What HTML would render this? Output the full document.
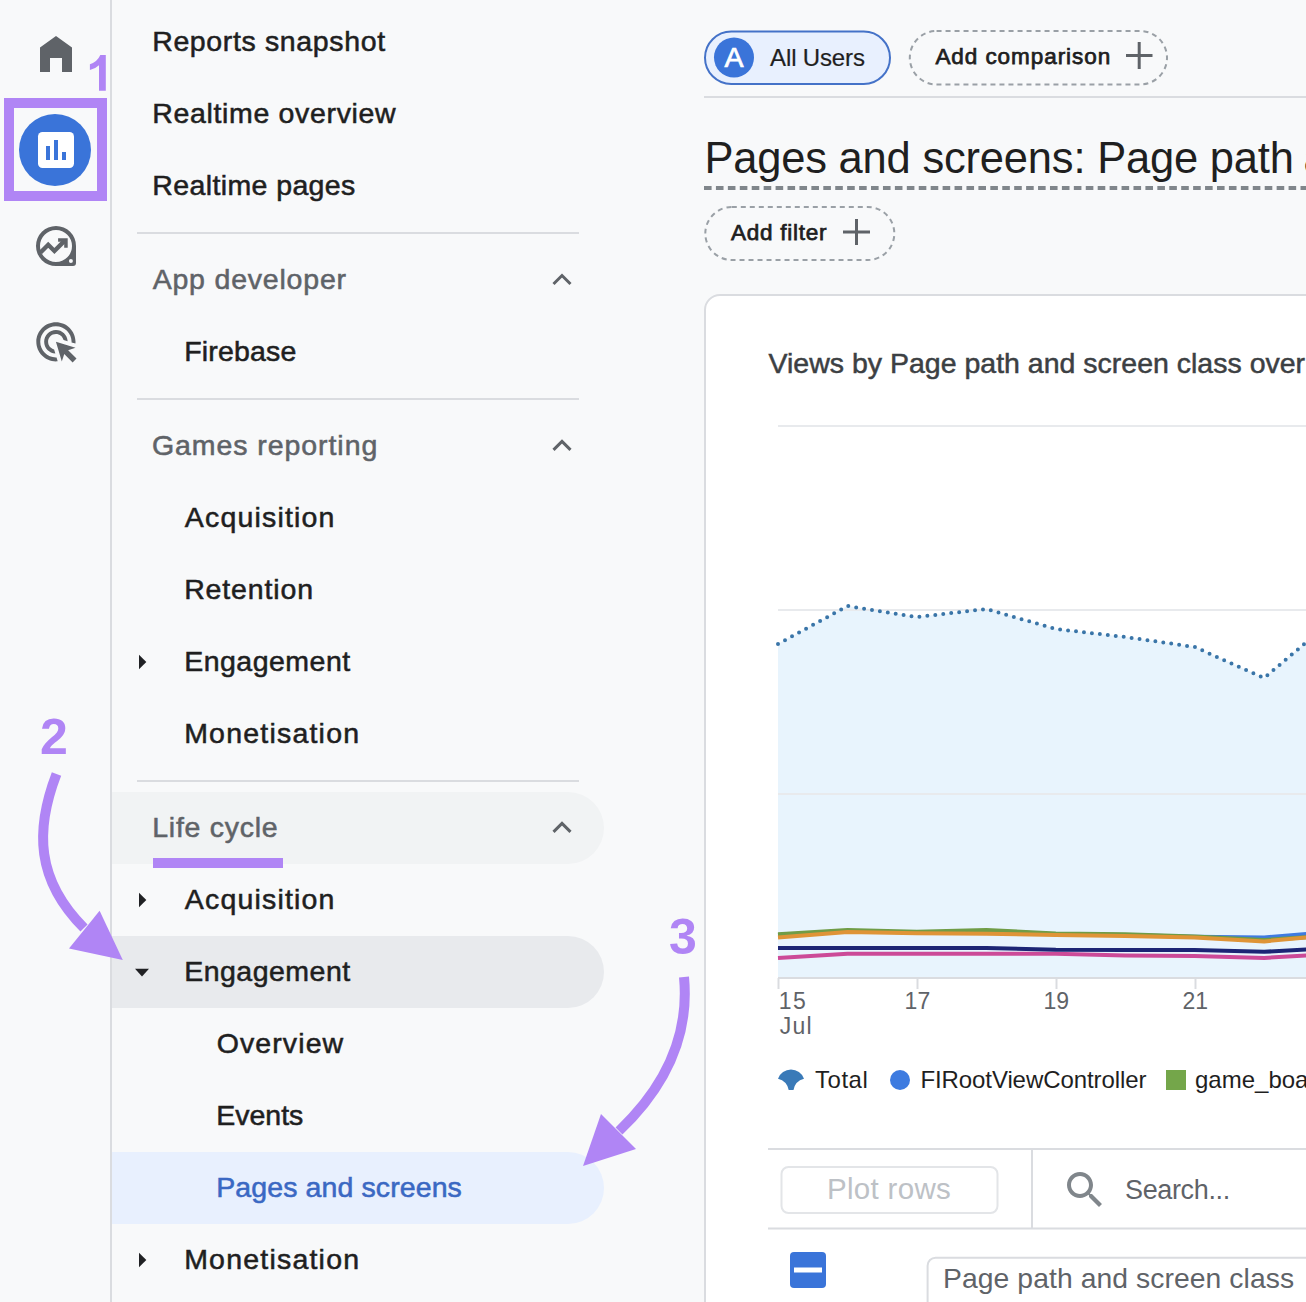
<!DOCTYPE html>
<html>
<head>
<meta charset="utf-8">
<style>
html,body{margin:0;padding:0;width:1306px;height:1302px;overflow:hidden;background:#f8f9fa;}
svg{display:block;font-family:"Liberation Sans", sans-serif;}
</style>
</head>
<body>
<svg width="1306" height="1302" viewBox="0 0 1306 1302">
<rect x="0" y="0" width="1306" height="1302" fill="#f8f9fa"/>
<!-- rail divider -->
<rect x="110" y="0" width="2" height="1302" fill="#dadce0"/>
<!-- sidebar highlights -->
<path d="M112,792 H568 A36,36 0 0 1 568,864 H112 Z" fill="#f1f3f4"/>
<path d="M112,936 H568 A36,36 0 0 1 568,1008 H112 Z" fill="#e8eaed"/>
<path d="M112,1152 H568 A36,36 0 0 1 568,1224 H112 Z" fill="#e8f0fe"/>
<!-- sidebar dividers -->
<rect x="137" y="232" width="442" height="2" fill="#dadce0"/>
<rect x="137" y="398" width="442" height="2" fill="#dadce0"/>
<rect x="137" y="780" width="442" height="2" fill="#dadce0"/>
<!-- chevrons -->
<g fill="none" stroke="#5f6368" stroke-width="3">
<polyline points="553.5,284 562,275.5 570.5,284"/>
<polyline points="553.5,449.9 562,441.4 570.5,449.9"/>
<polyline points="553.5,831.9 562,823.4 570.5,831.9"/>
</g>
<!-- expand triangles -->
<g fill="#202124">
<polygon points="139,654.7 146.3,662 139,669.3"/>
<polygon points="139,892.7 146.3,900 139,907.3"/>
<polygon points="139,1252.7 146.3,1260 139,1267.3"/>
<polygon points="135,968.8 149,968.8 142,976.5"/>
</g>
<!-- rail icons -->
<polygon points="56,36 72,47.5 72,72 62,72 62,58 50,58 50,72 40,72 40,47.5" fill="#5f6368"/>
<circle cx="55" cy="150" r="36" fill="#3a74d9"/>
<rect x="38" y="132" width="36" height="36" rx="4.5" fill="#ffffff"/>
<rect x="46" y="146" width="4" height="14" fill="#3a74d9"/>
<rect x="54" y="140" width="4" height="20" fill="#3a74d9"/>
<rect x="62" y="152" width="4" height="8" fill="#3a74d9"/>
<!-- explore icon -->
<path fill="#5f6368" fill-rule="evenodd" d="M56,226 A20,20 0 0 1 76,246 L76,263 A3,3 0 0 1 73,266 L56,266 A20,20 0 0 1 56,226 Z M56,230 A16,16 0 1 0 56,262 A16,16 0 1 0 56,230 Z M70.9,259 A2,2 0 1 0 70.9,263 A2,2 0 1 0 70.9,259 Z"/>
<polyline points="40.5,252.5 48.2,244.8 54.4,251 64,241.4" fill="none" stroke="#5f6368" stroke-width="4.4"/>
<polygon points="58.1,238.2 67.7,238.2 67.7,247.7 64.2,247.7 64.2,243.5 62.3,241.7 58.1,241.7" fill="#5f6368"/>
<!-- ads icon -->
<g transform="translate(32.4,318.3) scale(1.96)"><path fill="#5f6368" d="M11.71,17.99C8.53,17.84,6,15.22,6,12c0-3.31,2.69-6,6-6c3.22,0,5.84,2.53,5.99,5.71l-2.1-0.63C15.48,9.310,13.89,8,12,8 c-2.21,0-4,1.79-4,4c0,1.89,1.31,3.48,3.08,3.89L11.71,17.99z M22,12c0,0.3-0.01,0.6-0.04,0.9l-1.97-0.59C20,12.21,20,12.1,20,12 c0-4.42-3.58-8-8-8s-8,3.58-8,8s3.58,8,8,8c0.1,0,0.21,0,0.31-0.01l0.59,1.97C12.6,21.99,12.3,22,12,22C6.48,22,2,17.52,2,12 C2,6.480,6.48,2,12,2S22,6.48,22,12z M18.23,16.26L22,15l-10-3l3,10l1.26-3.77l4.27,4.27l1.97-1.970L18.23,16.26z"/></g>
<!-- main: chips -->
<rect x="705" y="31.5" width="185" height="52.5" rx="26.25" fill="#e8f0fe" stroke="#4472c8" stroke-width="2"/>
<circle cx="734" cy="57.5" r="20" fill="#3a74d9"/>
<text x="724.4" y="67" fill="#ffffff" stroke="#ffffff" stroke-width="0.7" style="font-size:28.5px">A</text>
<rect x="909.8" y="31" width="257.2" height="53.5" rx="26.75" fill="none" stroke="#9aa0a6" stroke-width="2" stroke-dasharray="5 4"/>
<g stroke="#5f6368" stroke-width="3"><line x1="1126" y1="55.5" x2="1152.5" y2="55.5"/><line x1="1139.2" y1="42" x2="1139.2" y2="69"/></g>
<rect x="704" y="96" width="602" height="2" fill="#dadce0"/>
<line x1="704" y1="188" x2="1306" y2="188" stroke="#80868b" stroke-width="4" stroke-dasharray="7.6 4.33"/>
<rect x="705.3" y="207" width="189" height="53" rx="26.5" fill="none" stroke="#9aa0a6" stroke-width="2" stroke-dasharray="5 4"/>
<g stroke="#5f6368" stroke-width="3"><line x1="843" y1="232" x2="870" y2="232"/><line x1="856.5" y1="219" x2="856.5" y2="245"/></g>
<!-- card -->
<rect x="705" y="295" width="900" height="1200" rx="15" fill="#ffffff" stroke="#dadce0" stroke-width="2"/>
<!-- chart -->
<path d="M778,978 L778.0,644 L847.5,606 L916.9,617 L986.4,609 L1055.8,629 L1125.2,637 L1194.7,647 L1264.2,678 L1333.6,619 L1400,978 Z" fill="#e8f4fd"/>
<g stroke="#e8eaed" stroke-width="2"><line x1="778" y1="426" x2="1306" y2="426"/><line x1="778" y1="610" x2="1306" y2="610"/><line x1="778" y1="794" x2="1306" y2="794"/></g>
<line x1="778" y1="978" x2="1306" y2="978" stroke="#dadce0" stroke-width="2"/>
<g stroke="#dadce0" stroke-width="2"><line x1="778.5" y1="978" x2="778.5" y2="989"/><line x1="917.5" y1="978" x2="917.5" y2="989"/><line x1="1056.5" y1="978" x2="1056.5" y2="989"/><line x1="1195.5" y1="978" x2="1195.5" y2="989"/></g>
<g fill="none" stroke-width="4" stroke-linejoin="round">
<polyline points="778.0,957.9 847.5,953.7 916.9,953.7 986.4,953.7 1055.8,953.7 1125.2,955.5 1194.7,955.9 1264.2,957.9 1333.6,954" stroke="#cc4a98"/>
<polyline points="778.0,948 847.5,948 916.9,948 986.4,948 1055.8,949.8 1125.2,950 1194.7,949.9 1264.2,951.8 1333.6,948" stroke="#1c2575"/>
<polyline points="778.0,935 847.5,931 916.9,932.5 986.4,931 1055.8,934.2 1125.2,935 1194.7,936.8 1264.2,937.5 1333.6,931.5" stroke="#3f7be0"/>
<polyline points="778.0,934.2 847.5,930 916.9,931.7 986.4,930 1055.8,933.5 1125.2,934.3 1194.7,936.6 1264.2,940 1333.6,935.5" stroke="#709c46"/>
<polyline points="778.0,937.5 847.5,932 916.9,933.2 986.4,933.8 1055.8,935 1125.2,936 1194.7,937.5 1264.2,941.4 1333.6,935" stroke="#df9437"/>
</g>
<polyline points="778.0,644 847.5,606 916.9,617 986.4,609 1055.8,629 1125.2,637 1194.7,647 1264.2,678 1333.6,619" fill="none" stroke="#3a75a8" stroke-width="4" stroke-dasharray="0 8" stroke-linecap="round"/>
<!-- legend -->
<path d="M778,1078.7 A13.8,13.8 0 0 1 804,1078.7 Q795,1081 793.5,1090 L788.7,1090 Q787,1081 778,1078.7 Z" fill="#3a7ab8"/>
<circle cx="900" cy="1080" r="10" fill="#3d7be0"/>
<rect x="1166" y="1070" width="20" height="20" fill="#74a64a"/>
<!-- table toolbar -->
<rect x="768" y="1148" width="538" height="2" fill="#dadce0"/>
<rect x="768" y="1227.5" width="538" height="2" fill="#dadce0"/>
<rect x="1031" y="1149" width="2" height="79" fill="#dadce0"/>
<rect x="781.5" y="1167" width="216" height="46" rx="7" fill="#ffffff" stroke="#e3e5e8" stroke-width="2"/>
<g transform="translate(1061,1166) scale(2)"><path fill="#80868b" d="M15.5 14h-.79l-.28-.27C15.41 12.59 16 11.11 16 9.5 16 5.91 13.09 3 9.5 3S3 5.91 3 9.5 5.91 16 9.5 16c1.61 0 3.09-.59 4.23-1.57l.27.28v.79l5 4.99L20.490 19l-4.99-5zm-6 0C7.01 14 5 11.99 5 9.5S7.01 5 9.5 5 14 7.01 14 9.5 11.99 14 9.5 14z"/></g>
<rect x="790" y="1252" width="36" height="36" rx="4" fill="#3a74d9"/>
<rect x="794" y="1267.5" width="28" height="5" fill="#ffffff"/>
<rect x="927.6" y="1257.7" width="500" height="100" rx="8" fill="#ffffff" stroke="#dadce0" stroke-width="2"/>
<!-- annotations -->
<path d="M100.3,54.9 L105.8,54.9 L105.8,90.8 L99,90.8 L99,65.3 Q95.5,68.8 89.9,69.9 L89.9,64.2 Q97.5,61.5 100.3,54.9 Z" fill="#b085f5"/>
<rect x="9" y="103" width="93" height="93" fill="none" stroke="#b085f5" stroke-width="10"/>
<rect x="153" y="858" width="130" height="10" fill="#b085f5"/>
<g fill="none" stroke="#b085f5" stroke-width="10">
<path d="M56.5,774 C35,830 36,880 84,928"/>
<path d="M684,977 C690,1040 662,1090 619,1131"/>
</g>
<g fill="#b085f5">
<polygon points="122.8,960 99.6,910.8 69,948.4"/>
<polygon points="583,1166 601,1114 636,1149"/>
</g>
<g fill="#b085f5" style="font-size:50px;font-weight:bold">
<text x="40" y="754">2</text>
<text x="669" y="954">3</text>
</g>

<text x="152.18" y="50.7" fill="#1f1f1f" stroke="#1f1f1f" stroke-width="0.55" style="font-size:28.5px;font-weight:normal;letter-spacing:0.633px;">Reports snapshot</text>
<text x="152.18" y="122.7" fill="#1f1f1f" stroke="#1f1f1f" stroke-width="0.55" style="font-size:28.5px;font-weight:normal;letter-spacing:0.669px;">Realtime overview</text>
<text x="152.18" y="194.7" fill="#1f1f1f" stroke="#1f1f1f" stroke-width="0.55" style="font-size:28.5px;font-weight:normal;letter-spacing:0.398px;">Realtime pages</text>
<text x="152.68" y="288.8" fill="#5f6368" stroke="#5f6368" stroke-width="0.55" style="font-size:28.5px;font-weight:normal;letter-spacing:0.795px;">App developer</text>
<text x="184.18" y="360.7" fill="#1f1f1f" stroke="#1f1f1f" stroke-width="0.55" style="font-size:28.5px;font-weight:normal;letter-spacing:0.174px;">Firebase</text>
<text x="151.88" y="454.7" fill="#5f6368" stroke="#5f6368" stroke-width="0.55" style="font-size:28.5px;font-weight:normal;letter-spacing:0.939px;">Games reporting</text>
<text x="184.78" y="526.7" fill="#1f1f1f" stroke="#1f1f1f" stroke-width="0.55" style="font-size:28.5px;font-weight:normal;letter-spacing:1.188px;">Acquisition</text>
<text x="184.18" y="598.7" fill="#1f1f1f" stroke="#1f1f1f" stroke-width="0.55" style="font-size:28.5px;font-weight:normal;letter-spacing:0.862px;">Retention</text>
<text x="184.18" y="670.7" fill="#1f1f1f" stroke="#1f1f1f" stroke-width="0.55" style="font-size:28.5px;font-weight:normal;letter-spacing:0.483px;">Engagement</text>
<text x="184.18" y="742.7" fill="#1f1f1f" stroke="#1f1f1f" stroke-width="0.55" style="font-size:28.5px;font-weight:normal;letter-spacing:1.210px;">Monetisation</text>
<text x="152.28" y="836.7" fill="#5f6368" stroke="#5f6368" stroke-width="0.55" style="font-size:28.5px;font-weight:normal;letter-spacing:0.722px;">Life cycle</text>
<text x="184.78" y="908.7" fill="#1f1f1f" stroke="#1f1f1f" stroke-width="0.55" style="font-size:28.5px;font-weight:normal;letter-spacing:1.188px;">Acquisition</text>
<text x="184.18" y="980.7" fill="#1f1f1f" stroke="#1f1f1f" stroke-width="0.55" style="font-size:28.5px;font-weight:normal;letter-spacing:0.483px;">Engagement</text>
<text x="216.68" y="1052.7" fill="#1f1f1f" stroke="#1f1f1f" stroke-width="0.55" style="font-size:28.5px;font-weight:normal;letter-spacing:1.108px;">Overview</text>
<text x="216.18" y="1124.7" fill="#1f1f1f" stroke="#1f1f1f" stroke-width="0.55" style="font-size:28.5px;font-weight:normal;letter-spacing:0.014px;">Events</text>
<text x="216.18" y="1196.7" fill="#3a68c3" stroke="#3a68c3" stroke-width="0.55" style="font-size:28.5px;font-weight:normal;letter-spacing:0.107px;">Pages and screens</text>
<text x="184.18" y="1268.7" fill="#1f1f1f" stroke="#1f1f1f" stroke-width="0.55" style="font-size:28.5px;font-weight:normal;letter-spacing:1.210px;">Monetisation</text>
<text x="770.10" y="66.2" fill="#1f1f1f" stroke="#1f1f1f" stroke-width="0.2" style="font-size:24px;font-weight:normal;letter-spacing:-0.151px;">All Users</text>
<text x="935.38" y="64.4" fill="#1f1f1f" stroke="#1f1f1f" stroke-width="0.75" style="font-size:22.5px;font-weight:normal;letter-spacing:0.937px;">Add comparison</text>
<text x="704.40" y="172.8" fill="#1f1f1f" style="font-size:43.5px;font-weight:normal;letter-spacing:-0.200px;">Pages and screens: Page path</text>
<text x="1303.60" y="172.8" fill="#1f1f1f" style="font-size:43.5px;font-weight:normal;letter-spacing:0.000px;">and screen class</text>
<text x="730.88" y="240" fill="#1f1f1f" stroke="#1f1f1f" stroke-width="0.75" style="font-size:22.5px;font-weight:normal;letter-spacing:0.772px;">Add filter</text>
<text x="768.55" y="372.8" fill="#3c4043" stroke="#3c4043" stroke-width="0.5" style="font-size:28.5px;font-weight:normal;letter-spacing:0.000px;">Views by Page path and screen class over</text>
<text x="778.70" y="1009" fill="#5f6368" style="font-size:23px;font-weight:normal;letter-spacing:1.508px;">15</text>
<text x="904.60" y="1009" fill="#5f6368" style="font-size:23px;font-weight:normal;letter-spacing:0.000px;">17</text>
<text x="1043.50" y="1009" fill="#5f6368" style="font-size:23px;font-weight:normal;letter-spacing:0.000px;">19</text>
<text x="1182.50" y="1009" fill="#5f6368" style="font-size:23px;font-weight:normal;letter-spacing:0.000px;">21</text>
<text x="779.70" y="1033.7" fill="#5f6368" style="font-size:23px;font-weight:normal;letter-spacing:1.254px;">Jul</text>
<text x="815.00" y="1088" fill="#1f1f1f" style="font-size:24px;font-weight:normal;letter-spacing:0.534px;">Total</text>
<text x="920.40" y="1088" fill="#1f1f1f" style="font-size:24px;font-weight:normal;letter-spacing:-0.087px;">FIRootViewController</text>
<text x="1195.00" y="1088" fill="#1f1f1f" style="font-size:24px;font-weight:normal;letter-spacing:0.000px;">game_board</text>
<text x="827.00" y="1198.6" fill="#bdc1c6" style="font-size:29.5px;font-weight:normal;letter-spacing:0.305px;">Plot rows</text>
<text x="1125.00" y="1198.6" fill="#5f6368" style="font-size:27px;font-weight:normal;letter-spacing:-0.356px;">Search...</text>
<text x="943.00" y="1288" fill="#5f6368" style="font-size:28.3px;font-weight:normal;letter-spacing:0.077px;">Page path and screen class</text>
</svg>
</body>
</html>
